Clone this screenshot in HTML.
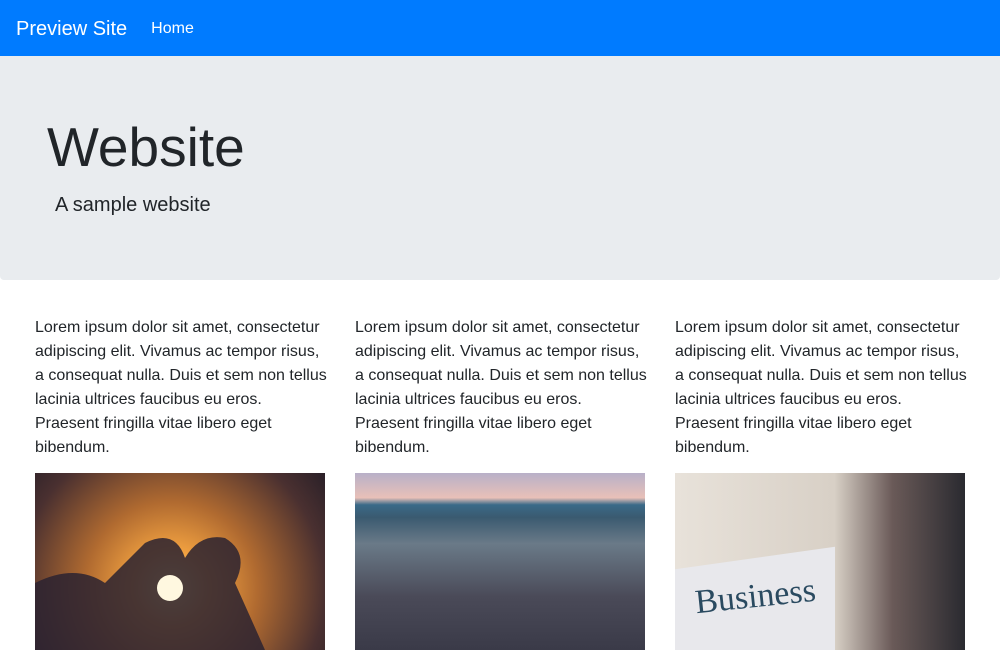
<!DOCTYPE html>
<html><head><meta charset="utf-8"><style>
*{box-sizing:border-box;margin:0;padding:0}
body{width:1000px;height:650px;overflow:hidden;font-family:"Liberation Sans",sans-serif;color:#212529;background:#fff}
.nav{height:56px;background:#007bff;display:flex;align-items:center;padding-left:16px;color:#fff;padding-top:2px}
.brand{font-size:20px;margin-right:24px}
.home{font-size:16px}
.jumbo{height:224px;background:#e9ecef;border-radius:0 0 4px 4px;padding-left:48px;position:relative}
.jumbo h1{position:absolute;left:47px;top:58px;font-size:55px;font-weight:300;line-height:67px}
.jumbo p{position:absolute;left:55px;top:137px;font-size:20px;font-weight:300;line-height:24px}
.col{position:absolute;top:316px;width:292px;font-size:16px;line-height:24px}
.img{position:absolute;top:473px;width:290px;height:177px;overflow:hidden}
</style></head><body>
<div class="nav"><span class="brand">Preview Site</span><span class="home">Home</span></div>
<div class="jumbo"><h1>Website</h1><p>A sample website</p></div>
<div class="col" style="left:35px">Lorem ipsum dolor sit amet, consectetur adipiscing elit. Vivamus ac tempor risus, a consequat nulla. Duis et sem non tellus lacinia ultrices faucibus eu eros. Praesent fringilla vitae libero eget bibendum.</div>
<div class="col" style="left:355px">Lorem ipsum dolor sit amet, consectetur adipiscing elit. Vivamus ac tempor risus, a consequat nulla. Duis et sem non tellus lacinia ultrices faucibus eu eros. Praesent fringilla vitae libero eget bibendum.</div>
<div class="col" style="left:675px">Lorem ipsum dolor sit amet, consectetur adipiscing elit. Vivamus ac tempor risus, a consequat nulla. Duis et sem non tellus lacinia ultrices faucibus eu eros. Praesent fringilla vitae libero eget bibendum.</div>
<div class="img" style="left:35px;background:radial-gradient(circle at 47% 65%,#fff6d0 0,#ffd070 5%,#f0a040 20%,#b06a30 45%,#4a3030 80%,#2a2028 100%)">
<svg width="290" height="177"><path d="M0 110 Q40 90 70 110 L110 70 Q140 55 150 85 Q165 60 190 65 Q215 80 200 110 L230 177 L0 177Z" fill="#2a2230" opacity=".85"/><circle cx="135" cy="115" r="13" fill="#fff8e0"/></svg></div>
<div class="img" style="left:355px;background:linear-gradient(#b8b0c8 0,#e8c0b8 14%,#3a6a88 18%,#3a5a70 25%,#6a7a88 40%,#4a4a58 70%,#3a3a48 100%)"></div>
<div class="img" style="left:675px;background:linear-gradient(90deg,#e8e2da 0,#d8d0c6 55%,#6a5a58 75%,#2a2a30 100%)">
<div style="position:absolute;left:0;top:85px;width:160px;height:110px;background:#e8e8ec;transform:skewY(-8deg)"></div>
<div style="position:absolute;left:20px;top:105px;font-family:'Liberation Serif',serif;font-size:34px;color:#2a4a60;transform:rotate(-6deg)">Business</div></div>
</body></html>
